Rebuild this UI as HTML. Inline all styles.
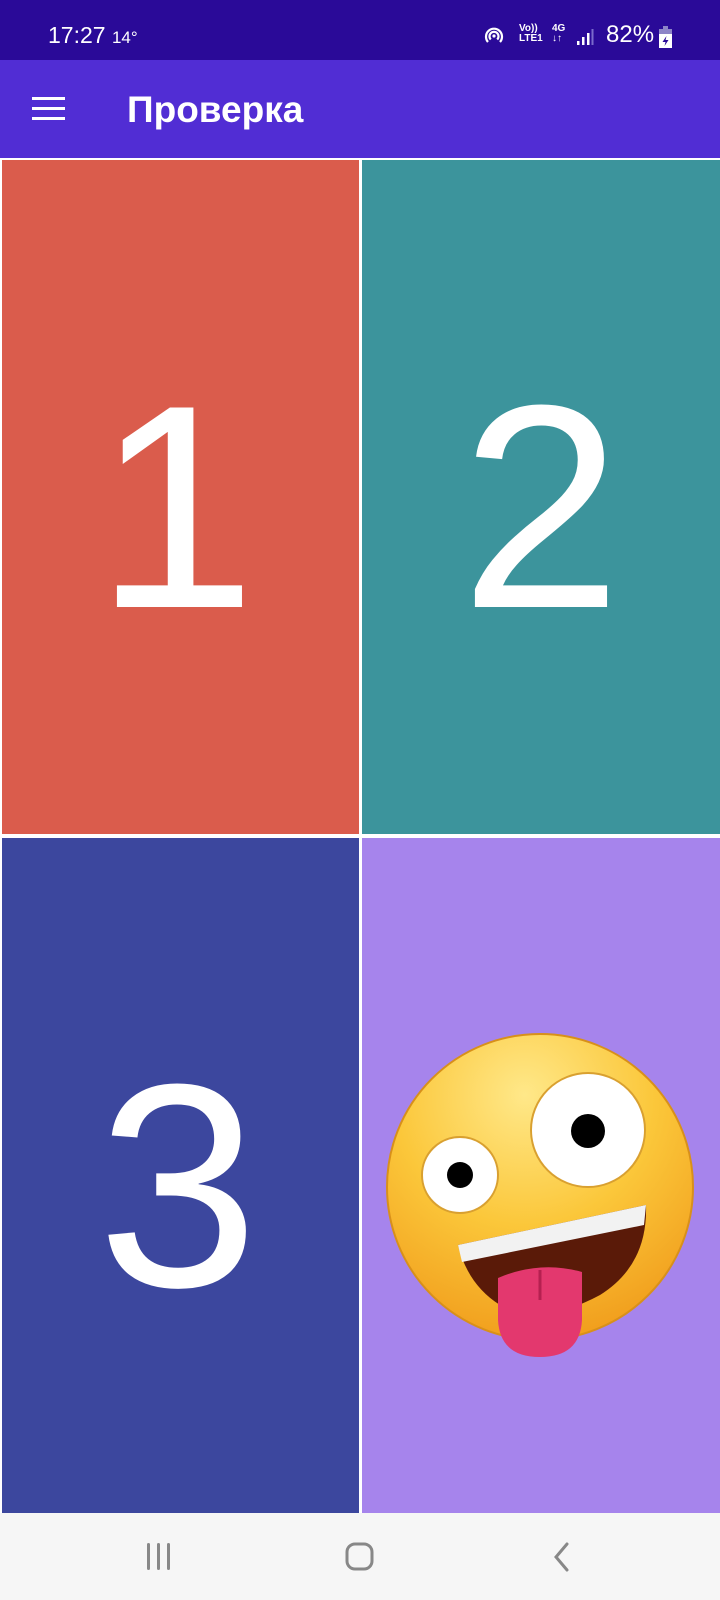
<!DOCTYPE html>
<html><head><meta charset="utf-8"><style>
*{margin:0;padding:0;box-sizing:border-box}
body{width:720px;height:1600px;background:#fff;position:relative;overflow:hidden;font-family:"Liberation Sans",sans-serif}
.sb{position:absolute;left:0;top:0;width:720px;height:60px;background:#2a0a98;color:#fff}
.ab{position:absolute;left:0;top:60px;width:720px;height:98px;background:#512dd4;color:#fff}
.t{position:absolute;display:flex;align-items:center;justify-content:center;color:#fff;font-size:290px;line-height:1}
.nav{position:absolute;left:0;top:1513px;width:720px;height:87px;background:#f6f6f6}
</style></head><body>
<div class="sb">
<div style="position:absolute;left:48px;top:22px;font-size:23px">17:27 <span style="font-size:17px">14°</span></div>
<svg style="position:absolute;left:484px;top:26px" width="20" height="20" viewBox="0 0 20 20" fill="none" stroke="#fff" stroke-width="2.2"><path d="M4 16A8 8 0 1 1 16 16"/><path d="M6.8 13.5A4.5 4.5 0 1 1 13.2 13.5"/><circle cx="10" cy="10" r="1.6" fill="#fff" stroke="none"/></svg>
<div style="position:absolute;left:519px;top:24px;font-size:10px;line-height:10px;font-weight:bold">Vo))<br>LTE1</div>
<div style="position:absolute;left:552px;top:24px;font-size:10px;line-height:10px;font-weight:bold">4G<br>↓↑</div>
<svg style="position:absolute;left:576px;top:28px" width="18" height="18"><rect x="1" y="13" width="2.5" height="4" fill="#fff"/><rect x="6" y="9" width="2.5" height="8" fill="#fff"/><rect x="11" y="5" width="2.5" height="12" fill="#fff"/><rect x="15.5" y="1" width="2" height="16" fill="#7a6acc"/></svg>
<div style="position:absolute;left:606px;top:21px;font-size:24px">82%</div>
<svg style="position:absolute;left:659px;top:26px" width="13" height="22"><rect x="4" y="0" width="5" height="3" fill="#8d84c8"/><rect x="0" y="3" width="13" height="6" fill="#8d84c8"/><rect x="0" y="8" width="13" height="14" fill="#fff"/><path d="M7.5 10L3.5 16H6.5L5.5 20L9.5 14H6.5Z" fill="#2a0a98"/></svg>
</div>
<div class="ab">
<svg style="position:absolute;left:32px;top:37px" width="34" height="25"><rect y="0" width="33" height="3" fill="#fff"/><rect y="10" width="33" height="3" fill="#fff"/><rect y="20" width="33" height="3" fill="#fff"/></svg>
<div style="position:absolute;left:127px;top:29px;font-size:37px;font-weight:bold">Проверка</div>
</div>
<div class="t" style="left:2px;top:160px;width:357px;height:674px;background:#da5c4c"><span style="margin-top:20px;margin-left:-10px">1</span></div>
<div class="t" style="left:362px;top:160px;width:358px;height:674px;background:#3c949c"><span style="margin-top:20px">2</span></div>
<div class="t" style="left:2px;top:838px;width:357px;height:675px;background:#3c479e"><span style="margin-top:20px;margin-left:-5px">3</span></div>
<div style="position:absolute;left:362px;top:838px;width:358px;height:675px;background:#a684ec"></div>
<svg style="position:absolute;left:0;top:0" width="720" height="1600">
<defs><radialGradient id="g" cx="0.45" cy="0.2" r="0.85"><stop offset="0" stop-color="#ffe889"/><stop offset="0.5" stop-color="#fbc73a"/><stop offset="1" stop-color="#f09a1a"/></radialGradient></defs>
<circle cx="540" cy="1187" r="153" fill="url(#g)" stroke="#d8901a" stroke-width="2"/>
<circle cx="588" cy="1130" r="57" fill="#fff" stroke="#d9a030" stroke-width="2"/>
<circle cx="588" cy="1131" r="17" fill="#000"/>
<circle cx="460" cy="1175" r="38" fill="#fff" stroke="#d9a030" stroke-width="2"/>
<circle cx="460" cy="1175" r="13" fill="#000"/>
<path d="M458 1245L646 1205Q648 1265 600 1295Q545 1325 500 1305Q468 1285 458 1245Z" fill="#5a1a08"/>
<path d="M458 1245L646 1205L644 1225L462 1262Z" fill="#f2f2f2"/>
<path d="M498 1278Q540 1260 582 1272L582 1320Q580 1357 540 1357Q500 1357 498 1320Z" fill="#e3386e"/>
<path d="M540 1270L540 1300" stroke="#b52050" stroke-width="3"/>
</svg>
<div class="nav">
<svg style="position:absolute;left:146px;top:30px" width="26" height="28" fill="#888"><rect x="1" y="0" width="3" height="27" rx="1.5"/><rect x="11" y="0" width="3" height="27" rx="1.5"/><rect x="21" y="0" width="3" height="27" rx="1.5"/></svg>
<svg style="position:absolute;left:345px;top:29px" width="30" height="30"><rect x="2" y="2" width="25" height="25" rx="8" fill="none" stroke="#888" stroke-width="3"/></svg>
<svg style="position:absolute;left:551px;top:29px" width="20" height="30"><path d="M16 2L5 15L16 28" fill="none" stroke="#888" stroke-width="3" stroke-linecap="round"/></svg>
</div>
</body></html>
